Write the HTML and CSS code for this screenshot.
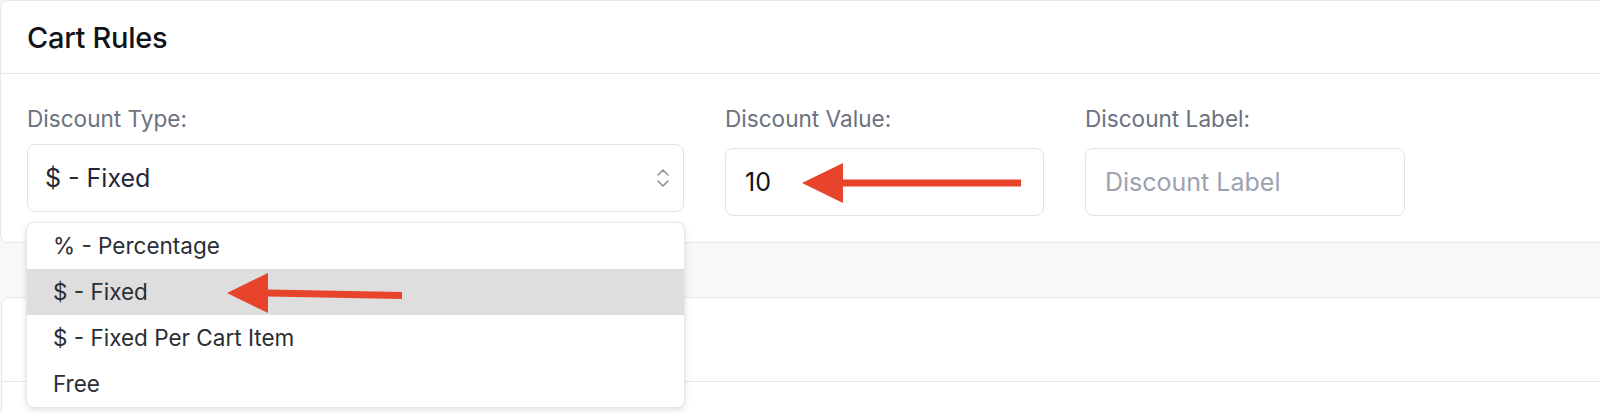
FILE: index.html
```html
<!DOCTYPE html>
<html lang="en">
<head>
    <meta charset="UTF-8">
    <meta name="viewport" content="width=device-width, initial-scale=1.0">
    <title>Cart Rules</title>
    <link rel="stylesheet" href="styles.css">
</head>
<body>

<div class="page">
    <!-- Cart rules card -->
    <div class="card">
        <div class="card-header">Cart Rules</div>
        <div class="card-body">
            <div class="fields">
                <div class="field">
                    <label class="field-label">Discount Type:</label>
                    <div class="select-wrap">
                        <div class="select">
                            <span>$ - Fixed</span>
                            <svg class="chevrons" width="12" height="18" viewBox="0 0 12 18">
                                <polyline points="1,6 6,1 11,6" />
                                <polyline points="1,12 6,17 11,12" />
                            </svg>
                        </div>
                        <!-- Открытый список -->
                        <ul class="dropdown">
                            <li>% - Percentage</li>
                            <li class="active">$ - Fixed</li>
                            <li>$ - Fixed Per Cart Item</li>
                            <li>Free</li>
                        </ul>
                    </div>
                </div>
                <div class="field">
                    <label class="field-label" for="discountValue">Discount Value:</label>
                    <input class="input" type="text" id="discountValue" value="10">
                </div>
                <div class="field">
                    <label class="field-label" for="discountLabel">Discount Label:</label>
                    <input class="input" type="text" id="discountLabel" placeholder="Discount Label">
                </div>
            </div>
        </div>
    </div>

    <div class="card card-second">
        <div class="card-row"></div>
        <div class="card-row card-row-last"></div>
    </div>

    <!-- Стрелки-пометки -->
    <svg class="marks" width="1600" height="413" viewBox="0 0 1600 413">
        <polygon points="802,183 843,163 843,179.5 1021,179.5 1021,186.5 843,186.5 843,203" />
        <polygon points="227,293 268,273 268,289.5 402,292 402,299 268,296.5 268,313" />
    </svg>
</div>

</body>
</html>
```

FILE: styles.css
```css
/* Основные стили страницы */
html, body {
    margin: 0;
    padding: 0;
}
body {
    background-color: #f7f8fa;
    font-family: Inter, "Noto Sans", sans-serif;
    overflow: hidden;
    width: 1600px;
    height: 413px;
}
.page {
    position: relative;
    height: 413px;
}

/* Карточки */
.card {
    background-color: #fff;
    border: 1px solid #e5e7eb;
    border-radius: 8px;
    margin-right: -20px;
}
.card-header {
    height: 72px;
    display: flex;
    align-items: center;
    padding-left: 26px;
    font-size: 29px;
    font-weight: 500;
    color: #111318;
    border-bottom: 1px solid #e5e7eb;
    letter-spacing: -0.3px;
}
.card-body {
    padding: 32px 26px 26px;
}
.card-second {
    margin-top: 54px;
    margin-left: 1px;
    border-bottom: none;
    border-bottom-left-radius: 0;
    border-bottom-right-radius: 0;
}
.card-row {
    height: 83px;
    border-bottom: 1px solid #e5e7eb;
}
.card-row-last {
    height: 40px;
    border-bottom: none;
}

/* Поля формы */
.fields {
    display: grid;
    grid-template-columns: 657px 319px 320px;
    column-gap: 41px;
}
.field-label {
    display: block;
    font-size: 22.6px;
    line-height: 26px;
    color: #6b7280;
}
.select-wrap {
    position: relative;
    margin-top: 12px;
}
.select {
    height: 66px;
    border: 1px solid #e2e4e9;
    border-radius: 8px;
    display: flex;
    align-items: center;
    justify-content: space-between;
    padding: 0 14px 0 17px;
    font-size: 25px;
    color: #1f2937;
}
.chevrons polyline {
    fill: none;
    stroke: #8b909a;
    stroke-width: 1.6;
    stroke-linecap: round;
    stroke-linejoin: round;
}
.input {
    display: block;
    box-sizing: border-box;
    width: 100%;
    height: 68px;
    margin-top: 16px;
    border: 1px solid #e2e4e9;
    border-radius: 8px;
    padding: 0 19px;
    font-family: Inter, "Noto Sans", sans-serif;
    font-size: 25px;
    color: #111318;
    outline: none;
}
.input::placeholder {
    color: #9ca3af;
}

/* Выпадающий список */
.dropdown {
    position: absolute;
    top: 78px;
    left: -1px;
    right: -1px;
    margin: 0;
    padding: 0;
    list-style: none;
    background-color: #fff;
    border: 1px solid #e6e6e8;
    border-radius: 8px;
    box-shadow: 0 2px 6px rgba(0,0,0,0.12);
    overflow: hidden;
    z-index: 2;
}
.dropdown li {
    height: 46px;
    line-height: 46px;
    padding-left: 26px;
    font-size: 22.5px;
    color: #2a2e35;
}
.dropdown li.active {
    background-color: #dedede;
}

/* Стрелки */
.marks {
    position: absolute;
    left: 0;
    top: 0;
    pointer-events: none;
    z-index: 3;
}
.marks polygon {
    fill: #e8432b;
}
```
